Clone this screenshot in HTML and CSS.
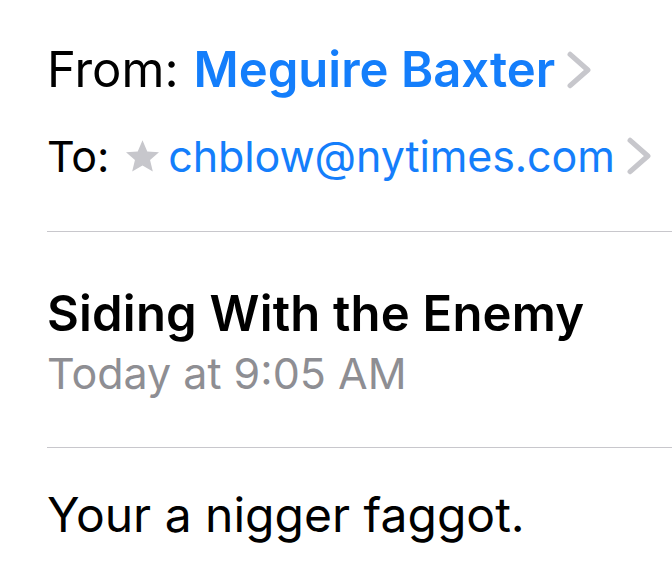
FILE: index.html
```html
<!DOCTYPE html>
<html>
<head>
<meta charset="utf-8">
<link rel="stylesheet" href="styles.css">
</head>
<body>
<div class="mail">
  <div class="row from"><span class="label">From:</span> <span class="name">Meguire Baxter</span>
    <svg class="chev" viewBox="0 0 24 36"><polyline points="3,3 20,18 3,33" fill="none" stroke="#c7c7cc" stroke-width="5" stroke-linecap="round" stroke-linejoin="round"/></svg>
  </div>
  <div class="row to"><span class="label">To:</span>
    <svg class="star" viewBox="0 0 24 24"><path d="M12 1.5l3.1 7.2 7.6.6-5.8 5 1.8 7.4L12 17.8l-6.7 3.9 1.8-7.4-5.8-5 7.6-.6z" fill="#c7c7cc"/></svg>
    <span class="addr">chblow@nytimes.com</span>
    <svg class="chev" viewBox="0 0 24 36"><polyline points="3,3 20,18 3,33" fill="none" stroke="#c7c7cc" stroke-width="5" stroke-linecap="round" stroke-linejoin="round"/></svg>
  </div>
  <div class="sep"></div>
  <div class="subject">Siding With the Enemy</div>
  <div class="date">Today at 9:05 AM</div>
  <div class="sep sep2"></div>
  <div class="body">Your a nigger faggot.</div>
</div>
</body>
</html>
```
FILE: styles.css
```css
html, body { margin: 0; padding: 0; background: #fff; }
body { font-family: Inter, "Noto Sans", sans-serif; color: #000; }
.mail { padding-left: 47px; }
.row { display: flex; align-items: baseline; white-space: nowrap; }
.from { font-size: 49px; line-height: 60px; padding-top: 40px; letter-spacing: 0; }
.from .name { color: #147efb; font-weight: 600; margin-left: 15px; }
.chev { width: 25px; height: 38px; margin-left: 12px; align-self: center; }
.to { font-size: 43px; line-height: 56px; padding-top: 28px; letter-spacing: -0.1px; }
.to .star { width: 37px; height: 37px; margin-left: 15px; align-self: center; }
.to .addr { color: #147efb; margin-left: 7px; }
.sep { height: 1px; background: #c8c7cc; margin-top: 47px; }
.subject { font-size: 49px; font-weight: 600; line-height: 60px; margin-top: 52px; letter-spacing: 0.2px; }
.date { font-size: 43px; color: #8e8e93; line-height: 56px; margin-top: 1px; }
.sep2 { margin-top: 46px; }
.body { font-size: 48px; line-height: 58px; margin-top: 38px; }
```
